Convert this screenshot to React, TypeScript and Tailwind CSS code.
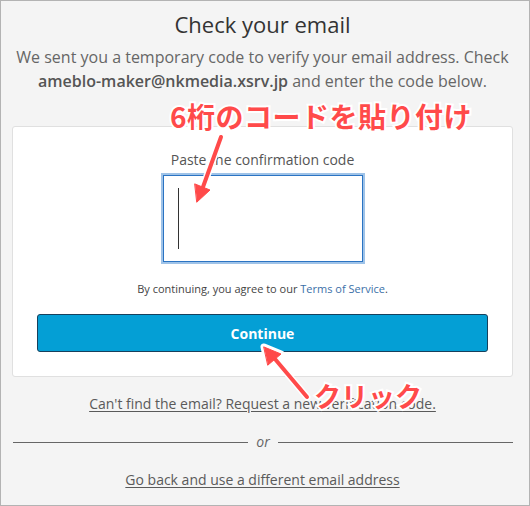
const ANNOT =
  "font-['Noto_Sans_CJK_JP','Noto_Sans',sans-serif] font-bold text-[#ff4a4a] [paint-order:stroke_fill] [-webkit-text-stroke:4px_white] leading-none";

function Arrows() {
  return (
    <svg
      className="pointer-events-none absolute left-0 top-0"
      width={530}
      height={506}
      viewBox="0 0 530 506"
    >
      <g stroke="white" strokeWidth={7} strokeLinecap="round" fill="white" strokeLinejoin="round">
        <line x1={220} y1={136} x2={202} y2={186} />
        <polygon points="196,201 209,189 194,183" />
        <line x1={306} y1={396} x2={274} y2={358} />
        <polygon points="263,346 280,353 267,364" />
      </g>
      <g stroke="#ff4a4a" strokeWidth={4} strokeLinecap="round" fill="#ff4a4a" strokeLinejoin="round">
        <line x1={220} y1={136} x2={202} y2={186} />
        <polygon points="196,201 209,189 194,183" strokeWidth={1} />
        <line x1={306} y1={396} x2={274} y2={358} />
        <polygon points="263,346 280,353 267,364" strokeWidth={1} />
      </g>
    </svg>
  );
}

export default function App() {
  return (
    <div className="relative h-[506px] w-[530px] overflow-hidden border border-[#b3b3b3] bg-[#f4f4f4] pl-[11px] pr-[16px] font-['Open_Sans',sans-serif] text-[#555]">
      <h1 className="pt-[8px] text-center text-[22px] leading-[30px] text-[#333]">
        Check your email
      </h1>
      <p className="mt-[6px] text-center text-[16px] leading-[24px] text-[#666]">
        We sent you a temporary code to verify your email address. Check{" "}
        <b className="font-semibold text-[#555]">ameblo-maker@nkmedia.xsrv.jp</b> and
        enter the code below.
      </p>

      <div className="mt-[33px] rounded-[3px] border border-[#e0e0e0] bg-white px-[24px] pb-[24px] pt-[23px]">
        <div className="flex flex-col items-center">
          <label className="text-[14px] leading-[20px] text-[#555]">
            Paste the confirmation code
          </label>
          <div className="mt-[5px] h-[87px] w-[200px] border border-[#2b74c3] bg-white pl-[14px] pt-[12px] shadow-[0_0_0_2px_#9fc3e8]">
            <div className="h-[61px] w-px bg-[#333]" />
          </div>
          <p className="mt-[19px] text-[11px] leading-[16px] text-[#444]">
            By continuing, you agree to our{" "}
            <span className="text-[#3b6fa8]">Terms of Service</span>.
          </p>
        </div>
        <button className="mt-[17px] flex h-[38px] w-full items-center justify-center rounded-[3px] border border-[#17405c] bg-[#049fd5] text-[14px] font-bold text-white">
          Continue
        </button>
      </div>

      <p className="mt-[17px] text-center text-[14px] leading-[20px] text-[#5a5a5a] underline underline-offset-2">
        Can't find the email? Request a new verification code.
      </p>

      <div className="mt-[18px] flex h-[20px] items-center gap-[8px] pl-px">
        <div className="h-px flex-1 bg-[#666]" />
        <span className="text-[14px] italic leading-[20px] text-[#666]">or</span>
        <div className="h-px flex-1 bg-[#666]" />
      </div>

      <p className="mt-[18px] text-center text-[14px] leading-[20px] text-[#5a5a5a] underline underline-offset-2">
        Go back and use a different email address
      </p>

      <div className={`absolute left-[169px] top-[101px] text-[28px] tracking-[0.5px] ${ANNOT}`}>
        6桁のコードを貼り付け
      </div>
      <div className={`absolute left-[313px] top-[381px] text-[27px] ${ANNOT}`}>
        クリック
      </div>
      <Arrows />
    </div>
  );
}
